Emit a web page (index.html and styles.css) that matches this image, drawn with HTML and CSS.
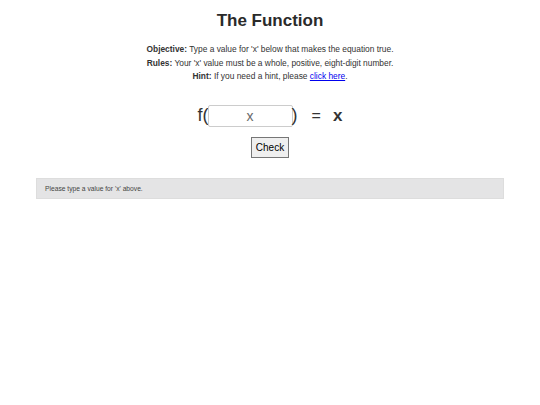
FILE: index.html
```html
<!DOCTYPE html>
<html>
<head>
<meta charset="utf-8">
<link rel="stylesheet" href="styles.css">
</head>
<body>
<div class="page">
  <h1 class="title">The Function</h1>
  <div class="info">
    <p><b>Objective:</b> Type a value for 'x' below that makes the equation true.</p>
    <p><b>Rules:</b> Your 'x' value must be a whole, positive, eight-digit number.</p>
    <p><b>Hint:</b> If you need a hint, please <a href="#">click here</a>.</p>
  </div>
  <div class="equation">
    <span class="fn">f(</span><input class="xin" type="text" placeholder="x"><span class="fn">)</span>
    <span class="eq">=</span>
    <span class="xv">x</span>
  </div>
  <div class="actions"><button class="check">Check</button></div>
  <div class="status">Please type a value for 'x' above.</div>
</div>
</body>
</html>
```
FILE: styles.css
```css
html, body { margin: 0; padding: 0; background: #fff; }
body { font-family: "Liberation Sans", Arial, sans-serif; color: #333; }
.page { padding: 10px 36px 0 36px; }
.title { margin: 0; font-size: 17px; font-weight: bold; text-align: center; line-height: 21px; color: #2a2a2a; }
.info { margin-top: 12px; text-align: center; font-size: 8.4px; line-height: 13.5px; color: #333; }
.info p { margin: 0; }
.info b { color: #333; }
.info a { color: #0000ee; text-decoration: underline; }
.equation { margin-top: 20px; display: flex; justify-content: center; align-items: center; font-size: 18px; height: 24px; color: #333; }
.fn { font-weight: normal; }
.xin { width: 83px; height: 20px; box-sizing: content-box; padding: 0; border: 1px solid #ccc; border-radius: 2px; font-family: "Liberation Sans", Arial, sans-serif; font-size: 14px; text-align: center; margin: 0 -1px; }
.xin::placeholder { color: #6a6a6a; }
.eq { margin-left: 14px; font-size: 16px; }
.xv { margin-left: 12px; font-weight: bold; font-size: 17px; }
.actions { margin-top: 9px; text-align: center; }
.check { font-family: "Liberation Sans", Arial, sans-serif; font-size: 10px; padding: 3px 4px; height: 21px; border: 1px solid #767676; background: #efefef; color: #000; border-radius: 0; }
.status { margin-top: 20px; background: #e4e4e5; border: 1px solid #ddd; padding: 5px 8px; font-size: 6.7px; line-height: 9px; color: #444; }
```
